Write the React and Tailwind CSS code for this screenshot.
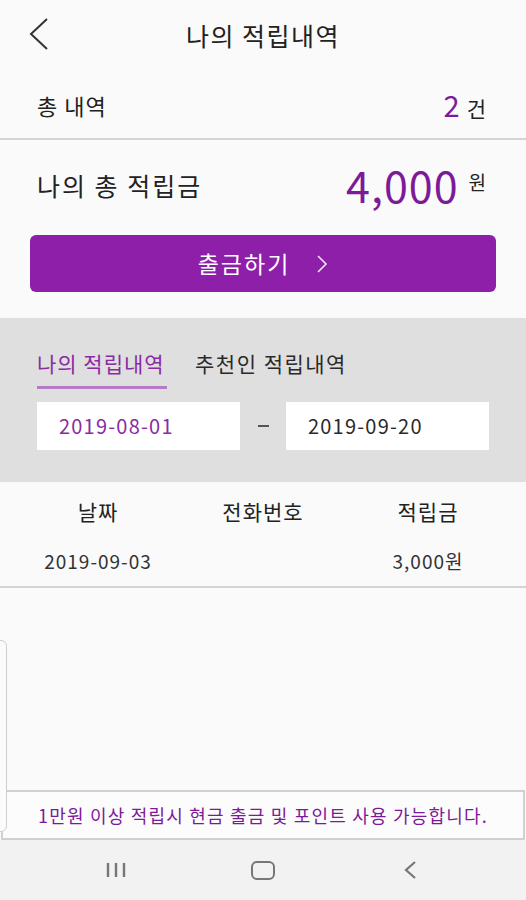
import React from "react";

const FONT = { fontFamily: '"Noto Sans CJK KR", "Noto Sans", sans-serif' };

const App = () => {
  const rows = [{ date: "2019-09-03", phone: "", amount: "3,000원" }];

  return (
    <div
      className="relative w-full h-[900px] flex flex-col bg-[#fafafa] text-[#222] overflow-hidden"
      style={FONT}
    >
      {/* header */}
      <div className="relative h-[72px] flex items-center justify-center">
        <svg
          className="absolute left-[27px] top-[17px]"
          width="24"
          height="34"
          viewBox="0 0 24 34"
          fill="none"
        >
          <path d="M20 2 L4 17 L20 32" stroke="#333" strokeWidth="2" />
        </svg>
        <h1 className="text-[25px] tracking-[1.5px] text-[#222]">나의 적립내역</h1>
      </div>

      {/* count */}
      <div className="h-[68px] px-[37px] flex items-center justify-between border-b-2 border-[#d4d4d4]">
        <span className="text-[22px] tracking-[1px]">총 내역</span>
        <span className="flex items-baseline gap-[7px] pr-[3px]">
          <span className="text-[29px] text-[#7d1a99]">2</span>
          <span className="text-[21px]">건</span>
        </span>
      </div>

      {/* total */}
      <div className="px-[30px] pt-[18px] pb-[26px]">
        <div className="px-[7px] flex items-center justify-between h-[56px]">
          <span className="text-[25px] tracking-[2px]">나의 총 적립금</span>
          <span className="flex items-baseline gap-[10px] pr-[3px]">
            <span className="text-[43px] leading-none tracking-[1px] text-[#7d1a99]">4,000</span>
            <span className="text-[19px] relative -top-[13px]">원</span>
          </span>
        </div>
        <button className="mt-[21px] w-full h-[57px] rounded-[6px] bg-[#8d1fa9] text-white text-[23px] tracking-[2px] flex items-center justify-center gap-[26px]">
          <span>출금하기</span>
          <svg width="12" height="20" viewBox="0 0 12 20" fill="none">
            <path d="M2 2 L10 10 L2 18" stroke="#f4e8f8" strokeWidth="1.6" />
          </svg>
        </button>
      </div>

      {/* filter */}
      <div className="bg-[#dfdfdf] h-[164px] px-[37px] pt-[30px]">
        <div className="flex gap-[28px] items-start">
          <div className="flex flex-col items-start">
            <span className="text-[21px] tracking-[1px] text-[#8a2ba3] leading-[30px]">나의 적립내역</span>
            <div className="mt-[8px] h-[3px] w-[130px] bg-[#b57cc6]" />
          </div>
          <span className="text-[21px] tracking-[1.5px] text-[#2a2a2a] leading-[30px]">추천인 적립내역</span>
        </div>
        <div className="mt-[13px] flex items-center">
          <div className="w-[203px] h-[48px] bg-white flex items-center pl-[22px] text-[20px] tracking-[1.2px] text-[#8a2ba3]">
            2019-08-01
          </div>
          <div className="w-[46px] flex justify-center">
            <div className="w-[11px] h-[2px] bg-[#555]" />
          </div>
          <div className="w-[203px] h-[48px] bg-white flex items-center pl-[22px] text-[20px] tracking-[1.2px] text-[#2a2a2a]">
            2019-09-20
          </div>
        </div>
      </div>

      {/* table */}
      <div className="border-b-2 border-[#d4d4d4]">
        <div className="grid grid-cols-[196px_134px_196px] h-[60px] text-[21px] tracking-[1px]">
          <div className="flex items-center justify-center">날짜</div>
          <div className="flex items-center justify-center">전화번호</div>
          <div className="flex items-center justify-center">적립금</div>
        </div>
        {rows.map((r) => (
          <div
            key={r.date}
            className="grid grid-cols-[196px_134px_196px] h-[44px] pt-[5px] text-[19px] tracking-[1px] text-[#333]"
          >
            <div className="flex items-start justify-center">{r.date}</div>
            <div className="flex items-start justify-center">{r.phone}</div>
            <div className="flex items-start justify-center">{r.amount}</div>
          </div>
        ))}
      </div>

      <div className="flex-1" />

      {/* notice */}
      <div className="mx-[1px] h-[50px] border-2 border-[#d0d0d0] bg-[#fcfcfc] flex items-center justify-center text-[18px] tracking-[1.2px] text-[#7d1a99]">
        1만원 이상 적립시 현금 출금 및 포인트 사용 가능합니다.
      </div>

      {/* nav bar */}
      <div className="h-[60px] bg-[#f2f2f2] flex items-center justify-center gap-[123px]">
        <svg width="24" height="18" viewBox="0 0 24 18" fill="none">
          <path d="M4 2 V16 M12 2 V16 M20 2 V16" stroke="#777" strokeWidth="2.4" />
        </svg>
        <div className="w-[24px] h-[19px] border-[2.5px] border-[#777] rounded-[6px]" />
        <svg width="24" height="22" viewBox="0 0 24 22" fill="none">
          <path d="M17 3 L8 11 L17 19" stroke="#777" strokeWidth="2.2" />
        </svg>
      </div>

      {/* edge handle */}
      <div className="absolute left-[-10px] top-[640px] w-[17px] h-[192px] rounded-[6px] border border-[#cfcfcf] bg-[#fbfbfb]" />
    </div>
  );
};

export default App;
